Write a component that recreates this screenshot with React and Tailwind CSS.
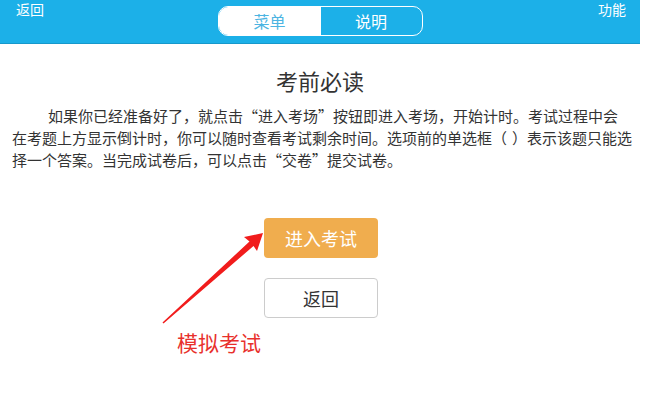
import React from 'react';

const FONT = { fontFamily: '"Noto Sans CJK SC", "Liberation Sans", sans-serif' };

const Header = () => {
  return (
    <div className="w-[640px] h-[44px] bg-[#1cb0e8] border-b border-[#1798cb] grid grid-cols-[1fr_auto_1fr] text-white">
      <div className="pl-[16px] pt-[1px] text-[14px] leading-[16px]">返回</div>
      {/* segmented tabs */}
      <div className="mt-[6px] w-[205px] h-[30px] flex rounded-[10px] border border-white overflow-hidden">
        <div className="w-[102px] bg-white text-[#4cb4e2] text-[16px] flex items-center justify-center">菜单</div>
        <div className="flex-1 text-white text-[16px] flex items-center justify-center">说明</div>
      </div>
      <div className="pr-[14px] pt-[1px] text-[14px] leading-[16px] text-right">功能</div>
    </div>
  );
};

const Arrow = () => (
  <svg className="absolute left-0 top-0 pointer-events-none" width="646" height="393" viewBox="0 0 646 393">
    <polygon
      points="263,233 257,251 253.5,246 163.5,323.5 162.5,322.5 249.5,241.5 244,237"
      fill="#f11c1c"
    />
  </svg>
);

export default function App() {
  return (
    <div className="relative w-[646px] h-[393px] bg-white overflow-hidden" style={FONT}>
      <Header />
      <div className="w-[640px] flex flex-col">
        <h1 className="mt-[21px] text-center text-[22px] leading-[30px] text-[#333]">考前必读</h1>
        <p className="mt-[10px] pl-[12px] text-[15px] leading-[22px] text-[#333] whitespace-nowrap">
          <span className="pl-[36px]">如果你已经准备好了，就点击“进入考场”按钮即进入考场，开始计时。考试过程中会</span>
          <br />
          在考题上方显示倒计时，你可以随时查看考试剩余时间。选项前的单选框（<span className="pl-[5px]"></span>）表示该题只能选
          <br />
          择一个答案。当完成试卷后，可以点击“交卷”提交试卷。
        </p>
        <div className="mt-[47px] flex flex-col items-center gap-[20px] pl-[2px]">
          <button className="w-[114px] h-[40px] rounded-[4px] bg-[#f0ad4e] text-white text-[18px]">进入考试</button>
          <button className="w-[114px] h-[40px] rounded-[4px] bg-white border border-[#ccc] text-[#333] text-[18px]">返回</button>
        </div>
      </div>
      <Arrow />
      <div className="absolute left-[177px] top-[332px] text-[21px] leading-[21px] text-[#e8302c]">模拟考试</div>
    </div>
  );
}
